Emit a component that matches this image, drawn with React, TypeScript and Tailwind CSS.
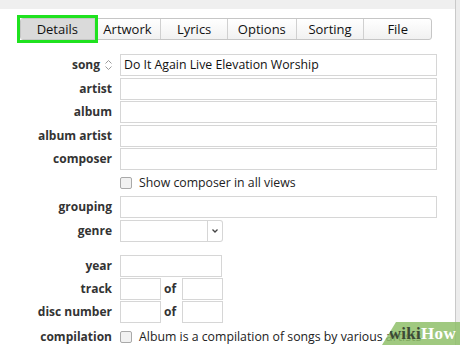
import React from 'react';

const tabs = ['Details', 'Artwork', 'Lyrics', 'Options', 'Sorting', 'File'];
const tabW = ['w-[73px]', 'w-[67px]', 'w-[67px]', 'w-[69px]', 'w-[68px]', 'w-[68px]'];

function Label({ children }: { children: React.ReactNode }) {
  return <div className="w-[113px] shrink-0 pr-[1px] text-right text-[12px] font-bold text-[#333]">{children}</div>;
}

function Box({ className = '' }: { className?: string }) {
  return <div className={`h-[22px] shrink-0 border border-[#d6d6d6] bg-white ${className}`} />;
}

function Check({ text }: { text: string }) {
  return (
    <div className="flex items-center gap-[7px] whitespace-nowrap">
      <div className="h-[12px] w-[12px] shrink-0 rounded-[2px] border border-[#a9a9a9] bg-[#f1f1f1]" />
      <span className="text-[12.3px] text-[#222]">{text}</span>
    </div>
  );
}

export default function App() {
  return (
    <div className="relative h-[345px] w-[460px] overflow-hidden bg-white text-[13px] leading-none" style={{ fontFamily: '"Open Sans", "Noto Sans", sans-serif' }}>
      <div className="h-[9px] bg-[#efefef]" />
      <div className="absolute right-0 top-0 h-full w-[5px] border-l border-[#c9c9c9] bg-[#ececec]" />

      {/* tab bar */}
      <div className="ml-[20px] mt-[9px] flex h-[22px] w-[412px] rounded-[3px] border border-[#c6c6c6] bg-gradient-to-b from-white to-[#f1f1f1]">
        {tabs.map((t, i) => (
          <div key={t} className={`${tabW[i]} flex items-center justify-center ${i > 0 ? 'border-l border-[#d0d0d0]' : ''} ${i === 0 ? 'relative bg-[#dadada]' : ''} text-[#111]`}>
            {t}
            {i === 0 && <div className="absolute -inset-[4px] border-[3px] border-[#1fe21f]" />}
          </div>
        ))}
      </div>

      <div className="mt-[14px] flex flex-col gap-[1px]">
        <div className="flex h-[22.5px] items-center gap-[7px]">
          <div className="flex w-[113px] items-center justify-end gap-[4px] text-[12px] font-bold text-[#333]">
            song
            <svg width="9" height="12" viewBox="0 0 9 12" fill="none" stroke="#9a9a9a" strokeWidth="1">
              <path d="M1.5 4.5 L4.5 1.5 L7.5 4.5" />
              <path d="M1.5 7.5 L4.5 10.5 L7.5 7.5" />
            </svg>
          </div>
          <div className="flex h-[22px] w-[317px] items-center border border-[#d6d6d6] px-[3px] text-[12.3px] text-[#111]">Do It Again Live Elevation Worship</div>
        </div>
        {['artist', 'album', 'album artist', 'composer'].map((l) => (
          <div key={l} className="flex h-[22.5px] items-center gap-[7px]">
            <Label>{l}</Label>
            <Box className="w-[317px]" />
          </div>
        ))}
        <div className="ml-[120px] flex h-[23px] items-center pt-[1px]">
          <Check text="Show composer in all views" />
        </div>
        <div className="flex h-[22.5px] items-center gap-[7px]">
          <Label>grouping</Label>
          <Box className="w-[317px]" />
        </div>
        <div className="mt-[1px] flex h-[22.5px] items-center gap-[7px]">
          <Label>genre</Label>
          <div className="flex">
            <Box className="w-[88px]" />
            <div className="flex h-[22px] w-[15px] items-center justify-center rounded-r-[3px] border border-l-0 border-[#d6d6d6]">
              <svg width="8" height="6" viewBox="0 0 8 6" fill="none" stroke="#444" strokeWidth="1.3">
                <path d="M1.5 1.5 L4 4 L6.5 1.5" />
              </svg>
            </div>
          </div>
        </div>
        <div className="mt-[11px] flex h-[22px] items-center gap-[7px]">
          <Label>year</Label>
          <Box className="w-[102px]" />
        </div>
        {['track', 'disc number'].map((l) => (
          <div key={l} className="flex h-[22px] items-center">
            <Label>{l}</Label>
            <Box className="ml-[7px] w-[41px]" />
            <span className="ml-[3px] w-[18px] text-[12px] font-bold text-[#333]">of</span>
            <Box className="w-[41px]" />
          </div>
        ))}
        <div className="mt-[2px] flex h-[23px] items-center gap-[7px]">
          <Label>compilation</Label>
          <Check text="Album is a compilation of songs by various artists" />
        </div>
      </div>

      {/* watermark */}
      <div className="absolute bottom-0 right-0 flex h-[23px] w-[78px] items-center justify-end pr-[4px] bg-[#8fbf6a]/85" style={{ clipPath: 'polygon(14px 0, 100% 0, 100% 100%, 0 100%)' }}>
        <span className="text-[17px] font-bold tracking-[0.3px]" style={{ fontFamily: '"Liberation Serif", serif' }}>
          <span className="text-[#3c4a36]">wiki</span>
          <span className="text-white">How</span>
        </span>
      </div>
    </div>
  );
}
